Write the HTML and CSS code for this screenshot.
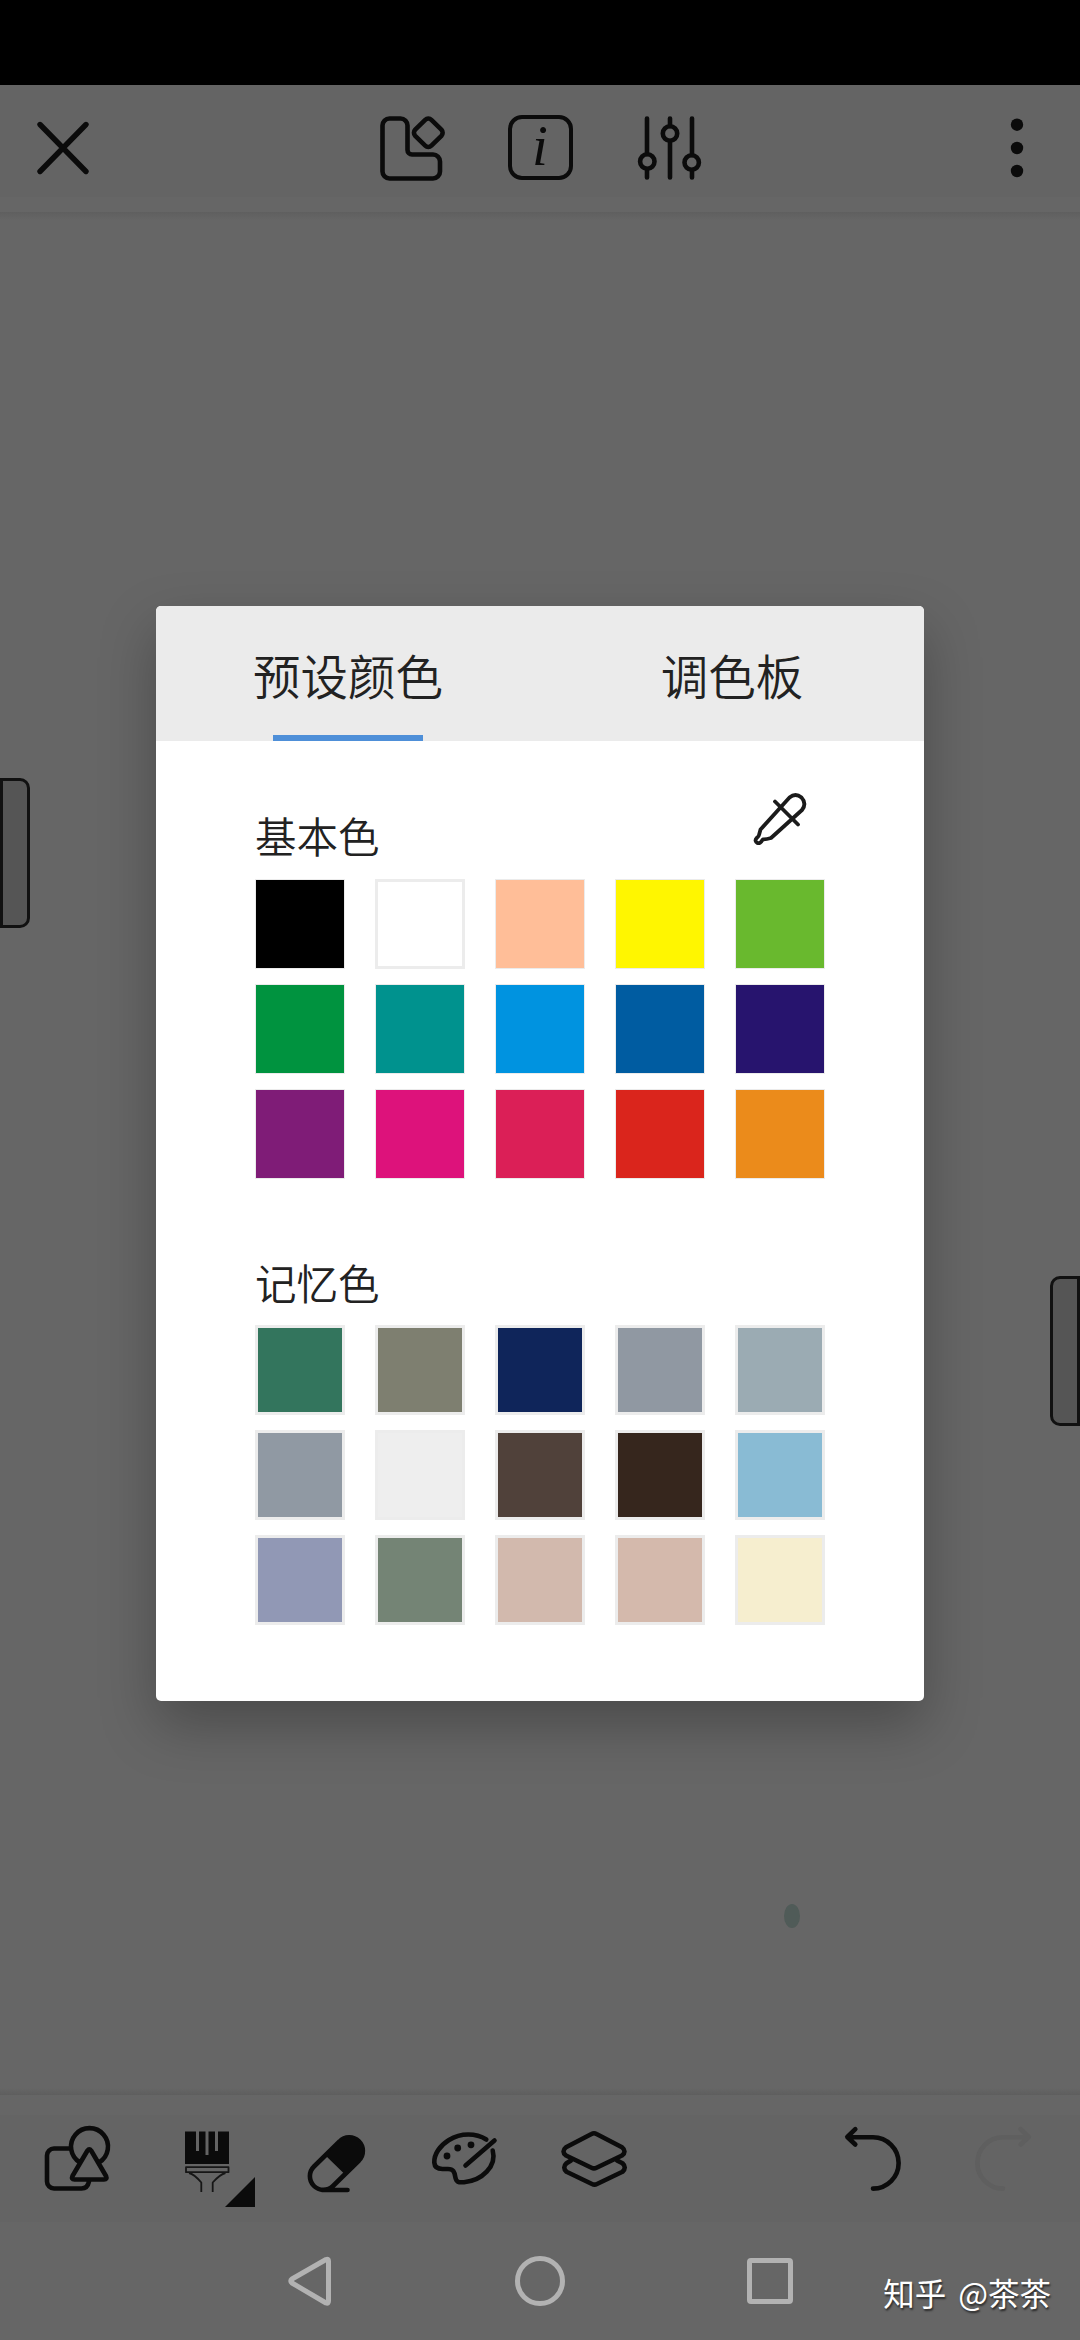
FILE: index.html
```html
<!DOCTYPE html>
<html lang="zh-CN">
<head>
<meta charset="utf-8">
<title>预设颜色</title>
<link rel="stylesheet" href="styles.css">
</head>
<body>
<div class="screen">
  <div class="status-bar"></div>
  <header class="top-bar">
    <svg class="icon" width="84" height="127" viewBox="21 85 84 127"><path class="thick" d="M40 124.500L86 171.500M86 124.500L40 171.500"/></svg>
    <div class="top-center">
      <svg class="icon" width="129" height="127" viewBox="346 85 129 127"><path d="M388.500 118.500h11a7 7 0 0 1 7 7v24.500a4.500 4.500 0 0 0 4.500 4.500h21a7 7 0 0 1 7 7v10a7 7 0 0 1-7 7h-43.500a7 7 0 0 1-7-7v-46a7 7 0 0 1 7-7zM424.200 119.800a4.500 4.500 0 0 1 6.200 0l10 9.800a4.500 4.500 0 0 1 0 6.200l-10 9.800a4.500 4.500 0 0 1-6.200 0l-10-9.800a4.500 4.500 0 0 1 0-6.200z"/></svg>
      <span class="info-cell"><span class="info">i</span></span>
      <svg class="icon" width="129" height="127" viewBox="604 85 129 127"><path d="M646 118.500v35.500M646 169v8.500M669 118.500v7.500M669 141v36.500M691 118.500v36.500M691 170v7.500"/><circle cx="646.300" cy="161.500" r="7.200"/><circle cx="669" cy="133.500" r="7.200"/><circle cx="690.700" cy="162.500" r="7.200"/></svg>
    </div>
    <svg class="icon end" width="84" height="127" viewBox="975 85 84 127"><g class="solid"><circle cx="1017" cy="124.700" r="6.200"/><circle cx="1017" cy="148" r="6.200"/><circle cx="1017" cy="171" r="6.200"/></g></svg>
  </header>
  <main class="canvas">
    <div class="handle handle-left"></div>
    <div class="handle handle-right"></div>
    <div class="paint"></div>
  </main>
  <footer class="tool-bar">
    <svg class="icon" width="129" height="127" viewBox="13 2095 129 127"><path d="M71 2148.500H54a7 7 0 0 0-7 7v26a7 7 0 0 0 7 7h27.500q6 0 7.500-7M80 2162.500a18.500 18.500 0 1 1 19 0M87.500 2150.500q1.800-2.500 3.600 0L106 2176q1.500 3.500-2 3.500H74.500q-3.500 0-2-3.500z"/></svg>
    <svg class="icon" width="129" height="127" viewBox="142 2095 129 127"><path class="solid" d="M185 2131.500h11V2151h3v-19.500h6.500V2155h3v-23.500h6.500V2151h3v-19.500h11V2164h-44zM255 2177v30h-30z"/><path class="thin" d="M186 2167.200h42.500v5H186zM189 2173q5 1 12.300 9.500v9.500M225.500 2173q-5 1-12.800 9.500v9.500"/></svg>
    <svg class="icon" width="129" height="127" viewBox="271 2095 129 127"><path d="M314 2166.500l25.500-25a13.500 13.500 0 0 1 19.500 19l-26 25.500a13.500 13.500 0 0 1-19-19.500zM322 2190h25.500"/><path class="solid" d="M325.500 2155.500L339.500 2141.500a13.500 13.500 0 0 1 19.500 19L344.500 2174z"/></svg>
    <svg class="icon" width="129" height="127" viewBox="400 2095 129 127"><path d="M486.300 2139.500C476 2133 461 2132.500 449 2140c-9 5.500-15 14-14.700 22.500.3 4.500 3 6.500 8.200 6.500h5.500c5.500 0 6.500 3 7.300 8 .8 5 3 5.700 8.700 5.200 18-1.500 33-16 28.700-31.700M494.500 2140.500L465.500 2165.500"/><g class="solid"><circle cx="447" cy="2156" r="3.400"/><circle cx="457.700" cy="2148" r="3.400"/><circle cx="471" cy="2144.800" r="3.400"/></g></svg>
    <svg class="icon" width="129" height="127" viewBox="529 2095 129 127"><path d="M591.500 2134q2.500-1.400 5 0l25.500 13.300q5 4.200 0 8.200l-25.500 12.300q-2.500 1.200-5 0L566 2155.500q-5-4-0-8.200zM571 2160.500l-4.500 2.800q-4.500 4.200 0 8.400L592 2184q2.500 1.200 5 0l25.500-12.300q4.500-4.200 0-8.400l-5.500-2.800"/></svg>
    <svg class="icon undo" width="129" height="127" viewBox="810 2095 129 127"><path d="M855.300 2129.200l-8 7.800 8 7.500M847.500 2137.200h25.500a25.700 25.700 0 0 1 0 51.400"/></svg>
    <svg class="icon disabled" width="129" height="127" viewBox="939 2095 129 127"><path d="M1020.700 2129.200l8 7.800-8 7.500M1028.500 2137.200h-25.500a25.700 25.700 0 0 0 0 51.400"/></svg>
  </footer>
  <nav class="system-nav">
    <svg class="icon nav" width="60" height="60" viewBox="279 2251 60 60"><path d="M325 2259.500q2.500-1 2.500 1.500v40q0 3-2.500 2l-34-20q-2.500-2 0-4z"/></svg>
    <svg class="icon nav" width="60" height="60" viewBox="510 2251 60 60"><circle cx="540" cy="2281" r="22.500"/></svg>
    <svg class="icon nav" width="60" height="60" viewBox="739 2251 60 60"><rect x="748.500" y="2260.500" width="41" height="41" rx="1.500"/></svg>
  </nav>

  <section class="dialog">
    <div class="tabs">
      <div class="tab active">预设颜色</div>
      <div class="tab">调色板</div>
    </div>
    <div class="panel">
      <div class="panel-head">
        <h2>基本色</h2>
        <svg class="icon dropper" width="60" height="60" viewBox="750 789 60 60"><path d="M760.500 829.500L789.500 797.500q6-5 12 0 5.500 6 .5 12.500L771 838q-5 1.500-8 1.300-3 4.700-5.500 3.700-3.500-2-.8-5 2.300-2 2.300-3zM775 801.500L798 824.500"/></svg>
      </div>
      <div class="swatches basic">
        <i class="c1"></i><i class="c2"></i><i class="c3"></i><i class="c4"></i><i class="c5"></i>
        <i class="c6"></i><i class="c7"></i><i class="c8"></i><i class="c9"></i><i class="c10"></i>
        <i class="c11"></i><i class="c12"></i><i class="c13"></i><i class="c14"></i><i class="c15"></i>
      </div>
      <h2 class="memory-title">记忆色</h2>
      <div class="swatches memory">
        <i class="m1"></i><i class="m2"></i><i class="m3"></i><i class="m4"></i><i class="m5"></i>
        <i class="m6"></i><i class="m7"></i><i class="m8"></i><i class="m9"></i><i class="m10"></i>
        <i class="m11"></i><i class="m12"></i><i class="m13"></i><i class="m14"></i><i class="m15"></i>
      </div>
    </div>
  </section>
  <div class="watermark">知乎 @茶茶</div>
</div>
</body>
</html>
```
FILE: styles.css
```css
* { box-sizing: border-box; }
body { margin: 0; }
.screen {
  position: relative;
  display: flex;
  flex-direction: column;
  width: 1080px;
  height: 2340px;
  overflow: hidden;
  background: #666;
  font-family: "Noto Sans CJK SC", sans-serif;
}
.status-bar { height: 85px; background: #000; }
.top-bar {
  display: grid;
  grid-template-columns: 1fr auto 1fr;
  height: 127px;
  padding: 0 21px;
  background: linear-gradient(#646464 112px, #666 112px);
}
.top-center { display: flex; }
.end { justify-self: end; }
.icon {
  display: block;
  flex: none;
  fill: none;
  stroke: #0b0b0b;
  stroke-width: 4.6;
  stroke-linecap: round;
  stroke-linejoin: round;
}
.thick { stroke-width: 5.4; }
.thin { stroke: #161616; stroke-width: 1.8; stroke-linecap: butt; }
.solid { fill: #0b0b0b; stroke: none; }
.info-cell { display: flex; width: 129px; height: 127px; padding: 30px 32px; }
.info {
  width: 66px;
  height: 65px;
  border: 4px solid #0b0b0b;
  border-radius: 14px;
  color: #0b0b0b;
  font: italic 57px/54px "Liberation Serif", serif;
  text-align: center;
}
.canvas {
  position: relative;
  height: 1883px;
  background: linear-gradient(#5f5f5f, #666 8px, #666 1876px, #5e5e5e);
}
.handle {
  position: absolute;
  width: 30px;
  height: 150px;
  border: 3px solid #111;
  background: #555;
}
.handle-left { left: 0; top: 566px; border-radius: 0 10px 10px 0; }
.handle-right { right: 0; top: 1064px; border-radius: 10px 0 0 10px; }
.paint {
  position: absolute;
  left: 784px;
  top: 1692px;
  width: 16px;
  height: 24px;
  border-radius: 50%;
  background: #505b58;
}
.tool-bar {
  display: flex;
  height: 127px;
  padding: 0 12px 0 13px;
  background: linear-gradient(#666 20px, #646464 20px);
}
.undo { margin-left: auto; }
.disabled { stroke: #5f5f5f; }
.system-nav {
  display: flex;
  justify-content: center;
  gap: 170px;
  height: 118px;
  padding-top: 29px;
}
.nav { stroke: #b2b2b2; stroke-width: 5; }
.dialog {
  position: absolute;
  left: 156px;
  top: 606px;
  width: 768px;
  height: 1095px;
  border-radius: 5px;
  background: #fff;
  box-shadow: 0 24px 56px rgba(0, 0, 0, .27);
  overflow: hidden;
}
.tabs { display: flex; height: 135px; background: #ebebeb; }
.tab {
  display: flex;
  flex: 1;
  flex-direction: column;
  align-items: center;
  justify-content: space-between;
  padding-top: 33px;
  color: #222;
  font-size: 47.5px;
  font-weight: 350;
  line-height: 72px;
}
.tab.active::after { content: ""; width: 150px; height: 6px; background: #4e8fd8; }
.panel { padding: 48px 99px 0; }
.panel-head { display: flex; justify-content: space-between; height: 90px; }
.panel h2 {
  margin: 0;
  color: #222;
  font-size: 41.5px;
  font-weight: 350;
  line-height: 60px;
}
.panel-head h2 { padding-top: 16px; }
.dropper { margin-right: 15px; stroke: #1b1b1b; stroke-width: 3.8; }
.panel .memory-title { padding-top: 73px; height: 146px; }
.swatches {
  display: grid;
  grid-template-columns: repeat(5, 90px);
  grid-auto-rows: 90px;
  gap: 15px 30px;
}
.swatches i { display: block; }
.basic i { border: 1px solid #ebebeb; }
.memory i, .basic .c2 { border: 3px solid #ececec; }
.c1 { background: #000; }
.c2 { background: #fff; }
.c3 { background: #ffbe98; }
.c4 { background: #fff600; }
.c5 { background: #69b92e; }
.c6 { background: #00933f; }
.c7 { background: #00928e; }
.c8 { background: #0093e0; }
.c9 { background: #005ca1; }
.c10 { background: #27146e; }
.c11 { background: #7f1c77; }
.c12 { background: #dd127b; }
.c13 { background: #db1f57; }
.c14 { background: #da251c; }
.c15 { background: #eb8b1b; }
.m1 { background: #33755d; }
.m2 { background: #7e7f70; }
.m3 { background: #0f255a; }
.m4 { background: #9098a2; }
.m5 { background: #9babb3; }
.m6 { background: #9099a3; }
.m7 { background: #eee; }
.m8 { background: #50413a; }
.m9 { background: #36261d; }
.m10 { background: #89bbd4; }
.m11 { background: #9198b5; }
.m12 { background: #748475; }
.m13 { background: #d2b9ad; }
.m14 { background: #d4b9ac; }
.m15 { background: #f6eecf; }
.watermark {
  position: absolute;
  right: 29px;
  top: 2269px;
  color: #fff;
  font-size: 31.5px;
  line-height: 46px;
  word-spacing: 5px;
  white-space: nowrap;
  text-shadow: 1px 2px 2px rgba(0, 0, 0, .6);
}
```
